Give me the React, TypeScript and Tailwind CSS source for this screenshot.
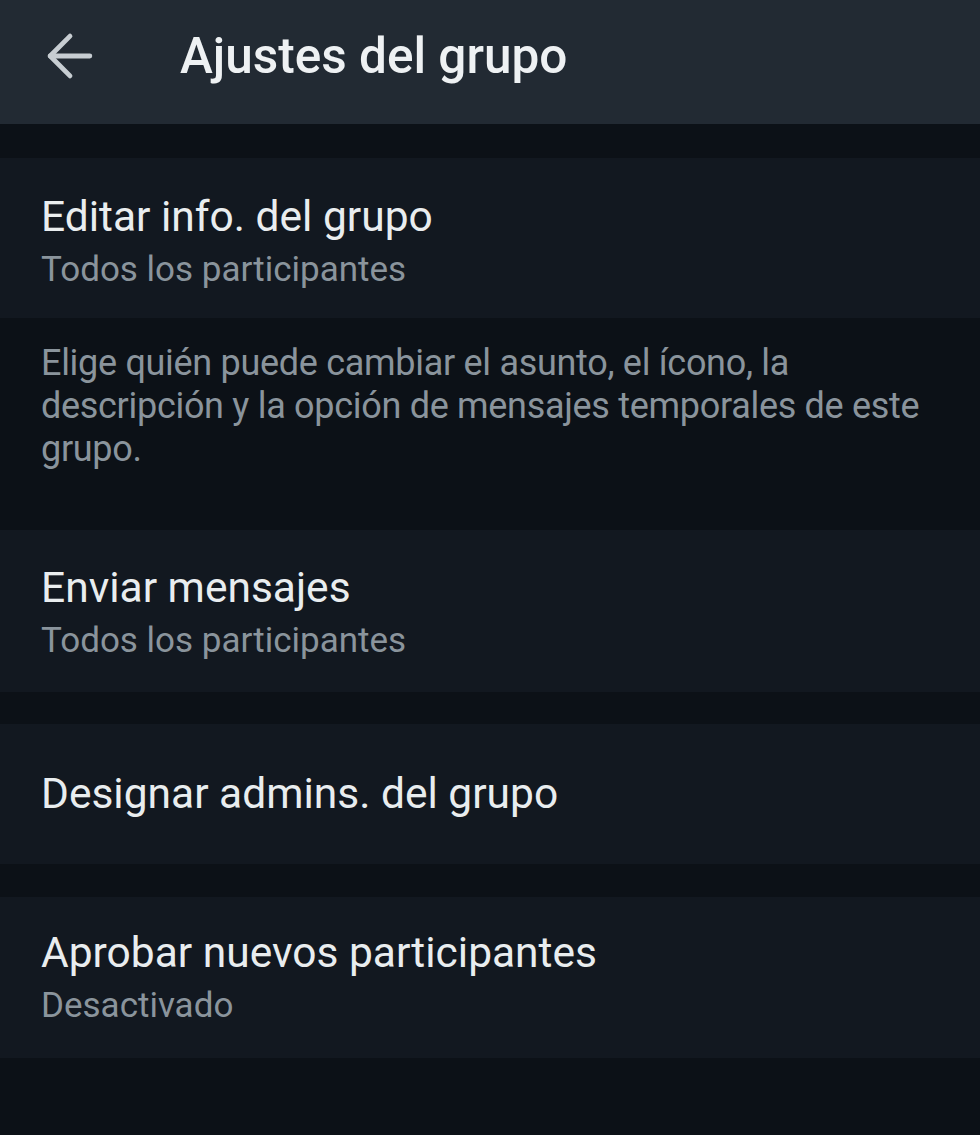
import { ArrowLeft } from "lucide-react";

type Item = { title: string; subtitle?: string; cls: string };

function Row({ title, subtitle, cls }: Item) {
  return (
    <div className={`flex flex-col bg-[#121820] px-[41px] ${cls}`}>
      <div className="text-[42.5px] leading-[48px] text-[#e9edef]">{title}</div>
      {subtitle && (
        <div className="mt-[9px] text-[35px] leading-[40px] text-[#8a949c]">{subtitle}</div>
      )}
    </div>
  );
}

export default function App() {
  return (
    <div
      className="min-h-screen w-full bg-[#0c1117]"
      style={{ fontFamily: "Roboto, 'Noto Sans', sans-serif" }}
    >
      <header className="flex h-[124px] items-center bg-[#222a33] pb-[12px]">
        <div className="flex w-[180px] items-center pl-[36px]">
          <ArrowLeft className="h-[68px] w-[68px] text-[#c7cdd2]" strokeWidth={1.7} />
        </div>
        <h1 className="text-[49.5px] font-medium leading-[56px] text-[#eef1f3]">Ajustes del grupo</h1>
      </header>

      <div className="h-[34px]" />

      <Row title="Editar info. del grupo" subtitle="Todos los participantes" cls="h-[160px] pt-[35px]" />

      <div className="h-[212px] px-[41px] pt-[24px]">
        <p className="text-[36px] leading-[43px] tracking-[-0.3px] text-[#8a949c]">
          Elige quién puede cambiar el asunto, el ícono, la
          <br />
          descripción y la opción de mensajes temporales de este
          <br />
          grupo.
        </p>
      </div>

      <Row title="Enviar mensajes" subtitle="Todos los participantes" cls="h-[162px] pt-[34px]" />

      <div className="h-[32px]" />

      <Row title="Designar admins. del grupo" cls="h-[140px] justify-center" />

      <div className="h-[33px]" />

      <Row title="Aprobar nuevos participantes" subtitle="Desactivado" cls="h-[161px] pt-[32px]" />
    </div>
  );
}
